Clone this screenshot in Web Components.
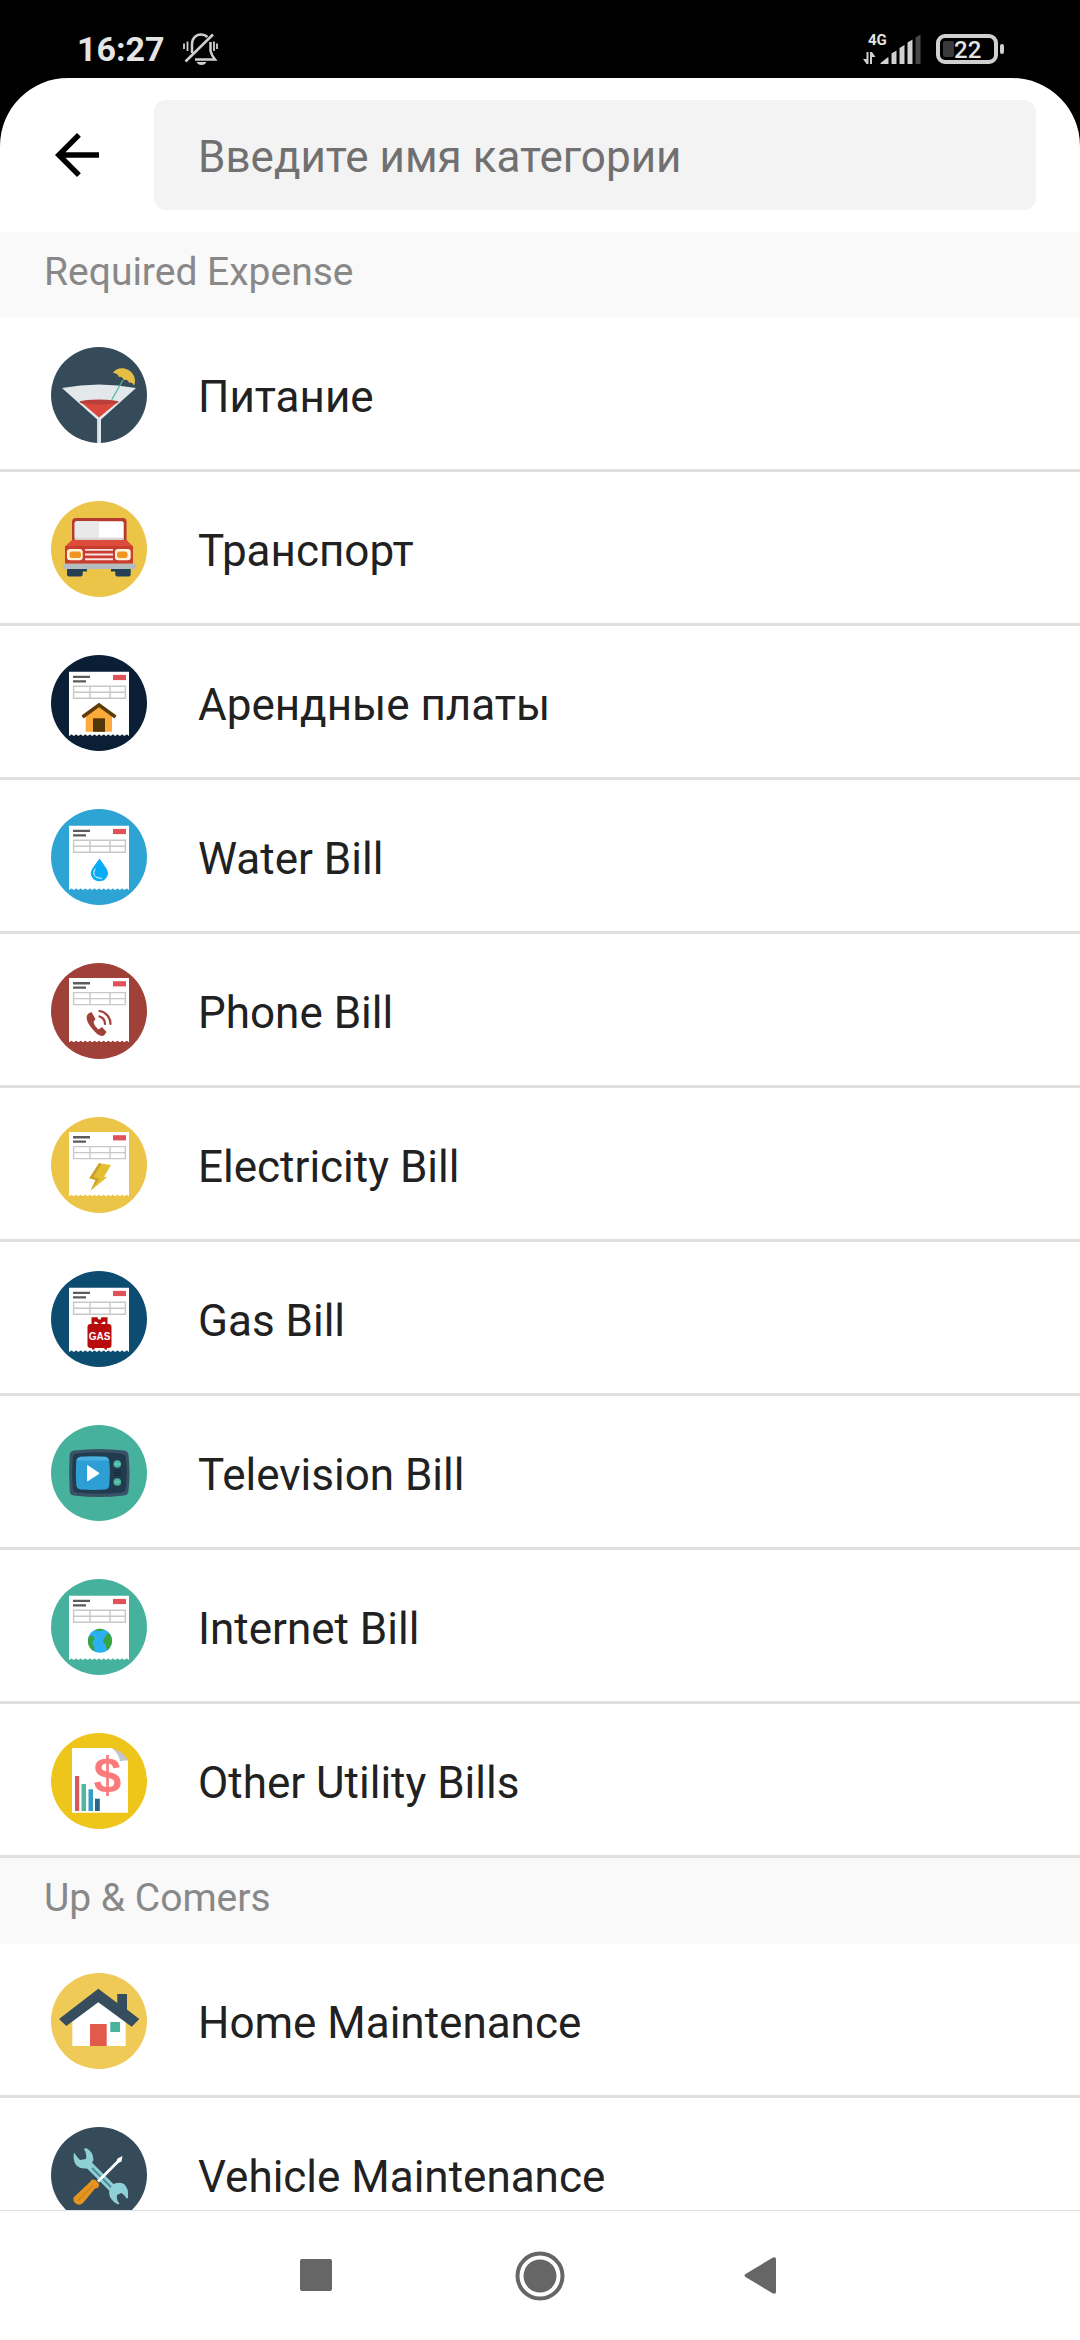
<!DOCTYPE html>
<html lang="ru">
<head>
<meta charset="utf-8">
<meta name="viewport" content="width=device-width, initial-scale=1">
<title>Категории</title>
<style>
  body {
    margin: 0;
    background: #000;
    color: #212121;
    font-family: Roboto, "Noto Sans", sans-serif;
  }
</style>
</head>
<body>
<category-app>
  <status-bar slot="status" time="16:27" battery="22"></status-bar>
  <search-header slot="header" placeholder="Введите имя категории"></search-header>
  <category-section heading="Required Expense">
    <category-item icon="drink">Питание</category-item>
    <category-item icon="car">Транспорт</category-item>
    <category-item icon="rent">Арендные платы</category-item>
    <category-item icon="water">Water Bill</category-item>
    <category-item icon="phone">Phone Bill</category-item>
    <category-item icon="electricity">Electricity Bill</category-item>
    <category-item icon="gas">Gas Bill</category-item>
    <category-item icon="tv">Television Bill</category-item>
    <category-item icon="internet">Internet Bill</category-item>
    <category-item icon="other">Other Utility Bills</category-item>
  </category-section>
  <category-section heading="Up &amp; Comers">
    <category-item icon="home">Home Maintenance</category-item>
    <category-item icon="tools">Vehicle Maintenance</category-item>
  </category-section>
  <nav-bar slot="nav"></nav-bar>
</category-app>

<script>
// receipt shared by all the bill icons
const bill = (bg, top, art) => `
  <circle cx="48" cy="48" r="48" fill="${bg}"/>
  <g transform="translate(0 ${top})">
    <path fill="#fff" d="M18 0h60v64H18z"/>
    <path stroke="${bg}" stroke-width="3" stroke-linecap="round" stroke-dasharray="0 4.6" d="M20.5 64.3H78"/>
    <path fill="#5c5c5c" d="M22 4h17v2.4H22zM22 8.6h13v2.2H22z"/>
    <path fill="#df5358" d="M62 3.2h13v5.2H62z"/>
    <path fill="none" stroke="#c8c8c8" stroke-width="1.4" d="M22.6 14.6h51.8v12H22.6zM22.6 20.6h51.8M39 14.6v12M59 14.6v12"/>
  </g>
  ${art}`;

const icons = {
  drink: `
    <circle cx="48" cy="48" r="48" fill="#354b5a"/>
    <path fill="#e3e9eb" d="M11 41Q48 34 85 41L50 72.5V95.9h-3.8V72.5z"/>
    <path fill="#d5dde0" d="M46.2 73h1.8v22.9h-1.8z"/>
    <path fill="#d9483d" d="M29 54.5h38.5L48 70.5z"/>
    <ellipse cx="48" cy="55" rx="19.5" ry="2.6" fill="#b93f39"/>
    <path stroke="#54b7a2" stroke-width="1.3" d="M72 33L60.7 52.7"/>
    <path fill="#e6bd45" d="M62 26C66 19 78 20 82.5 28C84.5 32 84.5 35 83 38.5Q81 34.5 78 36Q77 32 73 33Q71 29 68 30Q66.5 26 62 26z"/>`,
  car: `
    <circle cx="48" cy="48" r="48" fill="#ecc548"/>
    <rect x="21" y="17" width="54.6" height="27" rx="4" fill="#b63c30"/>
    <rect x="23.7" y="20.3" width="49" height="18.5" rx="2" fill="#fff"/>
    <path fill="#e9e9e9" d="M25.7 20.3H48v16.5H23.7v-14.5a2 2 0 0 1 2-2z"/>
    <path fill="#d7d4d2" d="M23.7 36.8h49v2.2h-49z"/>
    <path fill="#dd4b3b" d="M21 39h54.5l6.5 6.5H14z"/>
    <path fill="#c93d31" d="M14 45h68v17.7H14z"/>
    <g fill="#fff4dc"><rect x="16" y="48" width="15.7" height="11.3" rx="3"/><rect x="64" y="48" width="15.7" height="11.3" rx="3"/></g>
    <g fill="#f2941d"><rect x="18.5" y="50.6" width="11.5" height="6.4" rx="2.5"/><rect x="66" y="50.6" width="10.5" height="6.4" rx="2.5"/></g>
    <path fill="#fbe4e1" d="M34 48h28v1.8H34zM34 52.6h28v2H34zM34 57.3h28v2H34z"/>
    <rect x="12" y="62.7" width="73" height="5.2" rx="1.5" fill="#b2bcc1"/>
    <path fill="#254055" d="M16 68h20v2.5h-4.3v3a2 2 0 0 1-2 2H18a2 2 0 0 1-2-2zM60 68h19.7v5.5a2 2 0 0 1-2 2H66.3a2 2 0 0 1-2-2v-3H60z"/>`,
  rent: bill('#0a1f36', 16.7, `
    <path fill="#fbaa3b" d="M34.7 61L48 51l13 10v15.8H34.7z"/>
    <path fill="#533608" d="M42 63.3h12v13.5H42z"/>
    <path fill="none" stroke="#5e3c0a" stroke-width="3.5" d="M31.5 62L48 50l16.5 12"/>`),
  water: bill('#2ea4d5', 16.7, `
    <path fill="#06acf5" d="M48.5 49.5C52 55 57 60 57 64.5a8.6 7.8 0 0 1-17.2 0C39.8 60 45 55 48.5 49.5z"/>
    <path fill="none" stroke="#fff" stroke-width="1" stroke-linecap="round" d="M44 60c-3 5-.5 9.500 6.500 9.200"/>`),
  phone: bill('#a04139', 15, `
    <path fill="#a04139" d="M40.500 49l-3 1.500c-4 3.500-1 9.500 3.500 15 4.500 5.500 8 8.500 12 7l2.500-3.500-4.500-5-3.500 2.500c-2.500-2-4.500-5-5-7.500l2-3z"/>
    <path fill="none" stroke="#a04139" stroke-width="2.2" stroke-linecap="round" d="M48.5 53.5a8 8 0 0 1 5.5 7.5M48.5 48a13 13 0 0 1 11 13"/>`),
  electricity: bill('#ecc548', 15, `
    <path fill="#e4be30" d="M48 46.3L60 48l-7 11.8 3 .5-16.5 13.4 5.2-10.7-6.4-1.7z"/>
    <path fill="#c9a12d" d="M48 46.3l2.5.5-8 13.5 6 1.5-9 11.9 5.2-10.7-6.4-1.7z"/>`),
  gas: bill('#0c4c70', 16.7, `
    <path fill="#b90b0c" d="M40.5 46.3h6l1 2.2h2l1-2.2h6v8h-2.2v-3.5h-2l-2.5 2.2h-2l-2.5-2.2h-2v3.5h-2.8z"/>
    <rect x="36.5" y="53" width="24" height="24" rx="3" fill="#b90b0c"/>
    <path fill="#b90b0c" d="M41 76h2.5v2.5H41zM53.5 76H56v2.5h-2.5z"/>
    <text x="48.5" y="69" fill="#fff" font-family="Liberation Sans, sans-serif" font-size="10" font-weight="700" text-anchor="middle">GAS</text>`),
  tv: `
    <circle cx="48" cy="48" r="48" fill="#46b29d"/>
    <path fill="#395266" d="M23 25.5Q48 22.5 73 25.5 77 26 77.5 30 79.5 48 77.5 66 77 70 73 70.5 48 73.5 23 70.5 19 70 18.7 66 17.5 48 18.7 30 19 26 23 25.5z"/>
    <path fill="#213b4f" d="M26 28.5Q48 26 70 28.5 74.5 29 75 33 76.5 48 75 63 74.5 67 70 67.5 48 70 26 67.5 22 67 21.8 63 20.5 48 21.8 33 22 29 26 28.5z"/>
    <path fill="#2e9fd5" d="M30 31.8Q42 31 54 31.8 58 32.5 58.3 36 59.5 48 58.3 60 58 64 54 64.6 42 65.5 30 64.6 25.7 64 25.3 60 24.3 48 25.3 36 25.7 32.5 30 31.8z"/>
    <path fill="#49b0df" d="M30 31.8Q42 31 54 31.8 57.5 32.5 58 35.5H25.5Q26 32.5 30 31.8z"/>
    <path fill="#fff" stroke="#fff" stroke-width="1.5" stroke-linejoin="round" d="M36.8 41v14.5L47.5 48.3z"/>
    <circle cx="66.3" cy="39" r="3.8" fill="#4bb59f"/><circle cx="66.3" cy="57" r="3.8" fill="#4bb59f"/>
    <path stroke="#8bd0c2" stroke-width="1.2" d="M63.5 39h5.6M63.5 57h5.6"/>
    <path stroke="#142736" stroke-width="1" d="M62.5 45.5H70M62.5 48H70M62.5 50.5H70"/>`,
  internet: bill('#46b29d', 16.7, `
    <circle cx="49" cy="61.7" r="12" fill="#2cb0f2"/>
    <path fill="#37a542" d="M37.8 57.5q2.5-1.8 5 0 2 3-1 4.5-1 3 1.5 5.5v5q-5-2.5-6.2-8-.5-4 .7-7zM54.5 56.5q1-2 3.5-2.5 3 3.5 3 7.7 0 6-5 10-1.5-3.5-1-6.2-4.500-1.5-2.5-5.5 1.5-1 2-3.5zM44 51l4-1.2 5 .7-2 1.5h-5z"/>`),
  other: `
    <circle cx="48" cy="48" r="48" fill="#eec61b"/>
    <path fill="#fff" d="M21 15h40l16 13v51.8H21z"/>
    <path fill="#c4c5c7" d="M61 15Q72 18 77 27L69 28.2Q68 21 61 15z"/>
    <path fill="#d8575a" d="M24 43h4.2v35H24z"/><path fill="#52b5a0" d="M30.5 51H35v27h-4.5z"/>
    <path fill="#309fc8" d="M37.5 56.3H42V78h-4.5z"/><path fill="#286788" d="M44 65.7h4.8V78H44z"/>
    <text x="56.5" y="59" fill="#fb7b7c" font-family="Liberation Sans, sans-serif" font-size="50" font-weight="700" text-anchor="middle">$</text>`,
  home: `
    <circle cx="48" cy="48" r="48" fill="#efca57"/>
    <path fill="#fff" d="M21.3 46L47.5 26 74.7 46v27H21.3z"/>
    <path fill="#354d5d" d="M66.3 21H76v15.5L88.3 46l-7.6 7.7L47.3 29.3l-32 23.7L8 46l39.3-30.3 19 14.3z"/>
    <path fill="#e15b4c" d="M39 51h16.7v22H39z"/><path fill="#48b29d" d="M59.3 49H69v10h-9.7z"/>`,
  tools: `
    <circle cx="48" cy="48" r="48" fill="#354b5a"/>
    <path stroke="#8ed0d6" stroke-width="7.5" d="M37 37l27 27"/>
    <path stroke="#4d8c99" stroke-width="2" d="M41 41l20 20"/>
    <g fill="#8ed0d6">
      <path d="M23 25.5Q26 30 29 33L35 32Q36 27 33 22L35 21Q42 24 42.5 33L38 41Q30 43 25 38 21.5 33 23 25.5z"/>
      <path d="M61 58Q67 54 73 57 78 61 77 71L75.5 71.5Q73 67 70 66L66 68Q65 73 68.5 76.5L67 77.5Q58 73 58 65z"/>
    </g>
    <path fill="#fff" d="M71.5 29L70.5 34.5 67.500 36 48 55.5l-2-2L65.500 34l1-2.500z"/>
    <path fill="#e4941f" d="M41 52.5l3.5.5 3.5 4-.5 3.5-3.5 1-12 14.5q-3 3-6.5 1t-3-6.5l16-15z"/>
    <path stroke="#bd7718" stroke-width="1" d="M42 58L27 74"/>`
};

class CategoryIcon extends HTMLElement {
  constructor() {
    super();
    this.attachShadow({mode: 'open'});
  }
  connectedCallback() {
    this.shadowRoot.innerHTML = `
      <style>
        :host { display: block; flex: none; width: 96px; height: 96px; }
        svg { display: block; width: 100%; height: 100%; }
      </style>
      <svg viewBox="0 0 96 96" fill="none" aria-hidden="true">${icons[this.getAttribute('name')] || ''}</svg>`;
  }
}

class CategoryItem extends HTMLElement {
  constructor() {
    super();
    this.attachShadow({mode: 'open'});
  }
  connectedCallback() {
    this.shadowRoot.innerHTML = `
      <style>
        :host { display: block; border-bottom: 3px solid #e0e0e0; }
        button {
          display: flex;
          align-items: center;
          gap: 51px;
          width: 100%;
          padding: 29px 51px 26px;
          border: 0;
          background: none;
          color: inherit;
          font: 44px/52px Roboto, "Noto Sans", sans-serif;
          text-align: left;
        }
        span { padding-top: 4px; }
      </style>
      <button type="button">
        <category-icon name="${this.getAttribute('icon')}"></category-icon>
        <span><slot></slot></span>
      </button>`;
  }
}

class CategorySection extends HTMLElement {
  constructor() {
    super();
    this.attachShadow({mode: 'open'});
  }
  connectedCallback() {
    this.shadowRoot.innerHTML = `
      <style>
        :host { display: block; }
        h2 {
          margin: 0;
          padding: 18px 44px 24px;
          background: #f9f9f9;
          color: #888;
          font-size: 39px;
          font-weight: 400;
          line-height: 44px;
        }
      </style>
      <h2></h2>
      <slot></slot>`;
    this.shadowRoot.querySelector('h2').textContent = this.getAttribute('heading');
  }
}

class SearchHeader extends HTMLElement {
  constructor() {
    super();
    this.attachShadow({mode: 'open'});
  }
  connectedCallback() {
    const placeholder = this.getAttribute('placeholder');
    this.shadowRoot.innerHTML = `
      <style>
        :host { display: flex; align-items: center; gap: 44px; padding: 22px 44px; }
        button { flex: none; padding: 0; border: 0; background: none; }
        svg { display: block; width: 66px; height: 66px; }
        input {
          box-sizing: border-box;
          flex: 1;
          min-width: 0;
          height: 110px;
          padding: 4px 44px 0;
          border: 0;
          border-radius: 12px;
          background: #f3f3f3;
          color: inherit;
          font: 44px/52px Roboto, "Noto Sans", sans-serif;
        }
        input::placeholder { color: #707070; opacity: 1; }
      </style>
      <button type="button" aria-label="Назад">
        <svg viewBox="0 0 24 24"><path d="M20 11H7.8l5.6-5.6L12 4l-8 8 8 8 1.4-1.4L7.8 13H20z"/></svg>
      </button>
      <input type="text" placeholder="${placeholder}" aria-label="${placeholder}">`;
  }
}

class StatusBar extends HTMLElement {
  constructor() {
    super();
    this.attachShadow({mode: 'open'});
  }
  connectedCallback() {
    this.shadowRoot.innerHTML = `
      <style>
        :host {
          display: flex;
          align-items: center;
          box-sizing: border-box;
          height: 78px;
          padding: 20px 76px 0 77px;
          color: #e4e4e4;
        }
        .time { font-size: 34px; font-weight: 700; line-height: 40px; }
        svg { display: block; }
        .bell { margin-left: 17px; }
        .signal { margin-left: auto; }
        .battery {
          box-sizing: border-box;
          display: flex;
          align-items: center;
          width: 62px;
          height: 30px;
          margin-left: 15px;
          padding-left: 3px;
          border: 4px solid #d0d0d0;
          border-radius: 9px;
          font-size: 24px;
          font-weight: 500;
          line-height: 24px;
        }
        .battery span { padding-top: 2px; }
        .battery .level { width: 11px; height: 14px; border-radius: 2px; background: #3a3a3a; }
        .cap { width: 4px; height: 10px; margin-left: 2px; border-radius: 2px; background: #d0d0d0; }
      </style>
      <span class="time">${this.getAttribute('time')}</span>
      <svg class="bell" width="36" height="34" viewBox="0 0 36 34" fill="none" stroke="#d0d0d0" stroke-width="2.5">
        <path d="M3.5 29.5L31 2.5"/>
        <path d="M10 21V12.5C10 6 14 2.5 19 2.5q4 0 6.5 2.5M28.5 10v9q1 4 4.5 8.5H13"/>
        <path stroke-width="1.8" d="M2 11.5v5.5M5.5 9.5v9.5M32 9.5v9.5M35 11.5v5.5"/>
        <path fill="#d0d0d0" stroke="none" d="M14.5 30h10q-1.5 3-5 3t-5-3z"/>
      </svg>
      <svg class="signal" width="58" height="40" viewBox="0 -4 58 40" fill="#d0d0d0">
        <text x="5" y="12" fill="#e4e4e4" font-size="15" font-weight="700">4G</text>
        <path d="M3.5 19v12h2V19zM0 26h3.5v5zM9 19v12H7V19zM12.5 24H9v-5z"/>
        <path d="M17.5 31v-1l7-5.5h1V31zM28.5 31V20.5l5-3V31zM36.5 31V15l5-3v19zM44.5 31V9.5l5-3V31z"/>
        <path fill="#484848" d="M52.5 31V4.5l5-3V31z"/>
      </svg>
      <div class="battery"><span class="level"></span><span>${this.getAttribute('battery')}</span></div>
      <div class="cap"></div>`;
  }
}

class NavBar extends HTMLElement {
  constructor() {
    super();
    this.attachShadow({mode: 'open'});
  }
  connectedCallback() {
    this.shadowRoot.innerHTML = `
      <style>
        :host {
          display: flex;
          justify-content: center;
          border-top: 1px solid #dfdfdf;
          background: #fff;
        }
        button {
          display: flex;
          flex: 0 1 222px;
          justify-content: center;
          padding: 40px 0 39px;
          border: 0;
          background: none;
        }
        svg { width: 50px; height: 50px; fill: #666; }
      </style>
      <button type="button" aria-label="Недавние"><svg viewBox="0 0 50 50"><rect x="7" y="8" width="32" height="32" rx="2"/></svg></button>
      <button type="button" aria-label="Домой"><svg viewBox="0 0 50 50"><circle cx="25" cy="25" r="16.5"/><circle cx="25" cy="25" r="22.5" fill="none" stroke="#666" stroke-width="4"/></svg></button>
      <button type="button" aria-label="Назад"><svg viewBox="0 0 50 50"><path d="M8.500 23L36 6.5q3-1 3 1.5v33q0 2.5-3 1.5L8.500 26q-2-1.5 0-3z"/></svg></button>`;
  }
}

class CategoryApp extends HTMLElement {
  constructor() {
    super();
    this.attachShadow({mode: 'open'}).innerHTML = `
      <style>
        :host { display: flex; flex-direction: column; height: 100vh; }
        .sheet {
          display: flex;
          flex: 1;
          flex-direction: column;
          min-height: 0;
          overflow: hidden;
          border-radius: 68px 68px 0 0;
          background: #fff;
        }
        main { flex: 1; min-height: 0; overflow: hidden; }
      </style>
      <slot name="status"></slot>
      <div class="sheet">
        <slot name="header"></slot>
        <main><slot></slot></main>
        <slot name="nav"></slot>
      </div>`;
  }
}

customElements.define('category-icon', CategoryIcon);
customElements.define('category-item', CategoryItem);
customElements.define('category-section', CategorySection);
customElements.define('search-header', SearchHeader);
customElements.define('status-bar', StatusBar);
customElements.define('nav-bar', NavBar);
customElements.define('category-app', CategoryApp);
</script>
</body>
</html>
